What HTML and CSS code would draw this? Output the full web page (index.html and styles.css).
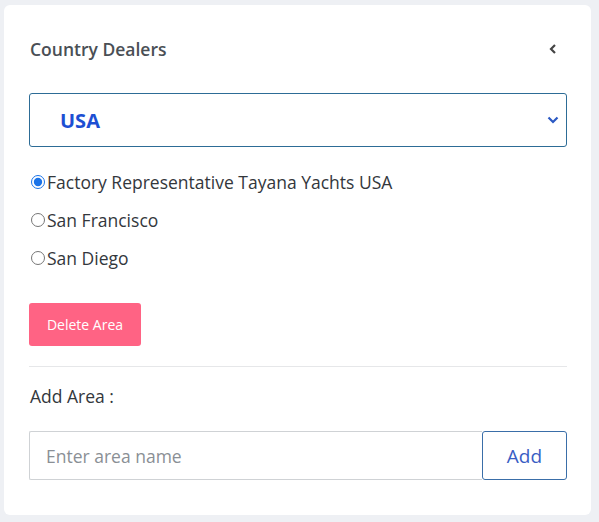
FILE: index.html
```
<!DOCTYPE html>
<html>
<head>
<meta charset="utf-8">
<link rel="stylesheet" href="styles.css">
</head>
<body>
<div class="card">
  <div class="header">
    <span class="title">Country Dealers</span>
    <svg class="back" width="8" height="10" viewBox="0 0 8 10"><path d="M6 1 L2 5 L6 9" fill="none" stroke="#444" stroke-width="2.2"/></svg>
  </div>
  <div class="select">
    <span class="select-value">USA</span>
    <svg class="caret" width="12" height="8" viewBox="0 0 12 8"><path d="M1.5 1.5 L6 6 L10.5 1.5" fill="none" stroke="#2b59c3" stroke-width="2.2"/></svg>
  </div>
  <div class="radios">
    <label class="radio-row"><input type="radio" name="area" checked><span>Factory Representative Tayana Yachts USA</span></label>
    <label class="radio-row"><input type="radio" name="area"><span>San Francisco</span></label>
    <label class="radio-row"><input type="radio" name="area"><span>San Diego</span></label>
  </div>
  <div class="actions"><button class="delete">Delete Area</button></div>
  <div class="divider"></div>
  <div class="label">Add Area :</div>
  <div class="input-group">
    <input class="area-input" type="text" placeholder="Enter area name">
    <button class="add">Add</button>
  </div>
</div>
</body>
</html>
```
FILE: styles.css
```
html, body {
  margin: 0;
  padding: 0;
  background: #eef0f4;
  font-family: "Open Sans", "Noto Sans", sans-serif;
}
body {
  padding: 5px 8px 7px 4px;
}
.card {
  width: 587px;
  height: 510px;
  box-sizing: border-box;
  background: #fff;
  border-radius: 6px;
  padding: 32px 24px 35px 25px;
  display: flex;
  flex-direction: column;
}
.header {
  height: 24px;
  display: flex;
  align-items: center;
  justify-content: space-between;
  padding-right: 10px;
}
.title {
  font-size: 17.5px;
  font-weight: 600;
  color: #4a4f55;
  line-height: 24px;
  padding-left: 1px;
}
.back { display: block; }
.select {
  margin-top: 32px;
  height: 54px;
  box-sizing: border-box;
  border: 1px solid #2d6c96;
  border-radius: 3px;
  display: flex;
  align-items: center;
  justify-content: space-between;
  padding: 0 7px 0 30px;
}
.select-value {
  font-size: 20px;
  font-weight: 700;
  color: #1d4fd3;
}
.caret { display: block; }
.radios {
  margin-top: 16px;
  display: flex;
  flex-direction: column;
}
.radio-row {
  height: 38px;
  display: flex;
  align-items: center;
  font-size: 17.5px;
  color: #33373c;
}
.radio-row input {
  margin: 0 2px 0 2px;
  width: 14px;
  height: 14px;
  accent-color: #1a73e8;
}
.actions { margin-top: 26px; }
.delete {
  width: 112px;
  height: 43px;
  border: none;
  border-radius: 3px;
  background: #ff6384;
  color: #fff;
  font-family: "Open Sans", sans-serif;
  font-size: 14px;
  padding: 0;
}
.divider {
  margin-top: 20px;
  height: 1px;
  background: #e6e7e9;
}
.label {
  margin-top: 17px;
  line-height: 24px;
  font-size: 17.5px;
  color: #33373c;
  padding-left: 1px;
}
.input-group {
  margin-top: 23px;
  display: flex;
  height: 49px;
}
.area-input {
  flex: 1;
  height: 49px;
  box-sizing: border-box;
  border: 1px solid #cfd2d5;
  border-right: none;
  border-radius: 2px 0 0 2px;
  padding: 0 16px;
  font-family: "Open Sans", sans-serif;
  font-size: 17.5px;
  color: #333;
  outline: none;
}
.area-input::placeholder { color: #8a8f95; }
.add {
  width: 85px;
  height: 49px;
  box-sizing: border-box;
  border: 1px solid #3a6ea8;
  border-radius: 3px;
  background: #fff;
  color: #3a5ec4;
  font-family: "Open Sans", sans-serif;
  font-size: 19px;
  padding: 0;
}
```
